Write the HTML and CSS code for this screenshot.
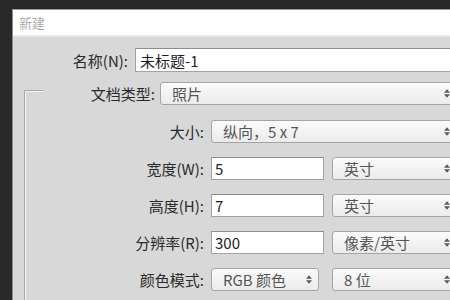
FILE: index.html
```html
<!DOCTYPE html>
<html lang="zh-CN">
<head>
  <meta charset="utf-8">
  <title>新建</title>
<link rel="stylesheet" href="styles.css">
</head>
<body>
  <div class="dialog">
    <div class="titlebar">新建</div>
    <div class="panel">
      <div class="row">
        <span class="lbl lbl-name">名称(N):</span>
        <div class="field field-name">未标题-1</div>
      </div>
      <div class="row">
        <span class="lbl lbl-type">文档类型:</span>
        <div class="select select-type">照片<svg class="arrows" viewBox="0 0 7 10"><path d="M3.5 0 7 4H0zM0 6h7l-3.5 4z"/></svg></div>
      </div>
      <div class="group">
        <div class="grow">
          <span class="lbl lbl-group">大小:</span>
          <div class="select select-full">纵向，5 x 7<svg class="arrows" viewBox="0 0 7 10"><path d="M3.5 0 7 4H0zM0 6h7l-3.5 4z"/></svg></div>
        </div>
        <div class="grow">
          <span class="lbl lbl-group">宽度(W):</span>
          <div class="field field-num">5</div>
          <div class="select select-unit">英寸<svg class="arrows" viewBox="0 0 7 10"><path d="M3.5 0 7 4H0zM0 6h7l-3.5 4z"/></svg></div>
        </div>
        <div class="grow">
          <span class="lbl lbl-group">高度(H):</span>
          <div class="field field-num">7</div>
          <div class="select select-unit">英寸<svg class="arrows" viewBox="0 0 7 10"><path d="M3.5 0 7 4H0zM0 6h7l-3.5 4z"/></svg></div>
        </div>
        <div class="grow">
          <span class="lbl lbl-group">分辨率(R):</span>
          <div class="field field-num">300</div>
          <div class="select select-unit">像素/英寸<svg class="arrows" viewBox="0 0 7 10"><path d="M3.5 0 7 4H0zM0 6h7l-3.5 4z"/></svg></div>
        </div>
        <div class="grow">
          <span class="lbl lbl-group">颜色模式:</span>
          <div class="select select-mode">RGB 颜色<svg class="arrows" viewBox="0 0 7 10"><path d="M3.5 0 7 4H0zM0 6h7l-3.5 4z"/></svg></div>
          <div class="select select-unit">8 位<svg class="arrows" viewBox="0 0 7 10"><path d="M3.5 0 7 4H0zM0 6h7l-3.5 4z"/></svg></div>
        </div>
      </div>
    </div>
  </div>
</body>
</html>
```

FILE: styles.css
```css
html, body {
  margin: 0;
  height: 100%;
  overflow: hidden;
}
body {
  background: #292929;
  font-family: "Noto Sans CJK SC", "Noto Sans", sans-serif;
  font-size: 15px;
  color: #2b2b2b;
}
.dialog {
  margin: 9px 0 0 12px;
  width: 443px;
  height: 291px;
  overflow: hidden;
  background: #d8d8d8;
  border-top: 1px solid #9a9a9a;
  border-left: 1px solid #8a8a8a;
}
.titlebar {
  height: 25px;
  line-height: 25px;
  padding-left: 6px;
  background: #fff;
  color: #ababab;
  font-size: 13px;
  border-bottom: 2px solid #e6e6e6;
}
.panel {
  display: flex;
  flex-direction: column;
  padding-top: 11px;
}
.row {
  display: flex;
  align-items: center;
  height: 24px;
  margin-bottom: 9px;
}
.grow {
  display: flex;
  align-items: center;
  height: 23px;
  margin-bottom: 14px;
}
.lbl {
  text-align: right;
  white-space: nowrap;
  line-height: 1;
}
.lbl-name {
  width: 115px;
  margin-right: 7px;
}
.lbl-type {
  width: 142px;
  margin-right: 5px;
}
.lbl-group {
  width: 179px;
  margin-right: 7px;
}
.group {
  position: relative;
  margin: -24px 0 0 11px;
  padding-top: 30px;
  border-left: 1px solid #a8a8a8;
  box-shadow: inset 1px 0 #f3f3f3;
  height: 220px;
}
.group::before {
  content: "";
  position: absolute;
  left: 0;
  top: 0;
  width: 18px;
  height: 1px;
  background: #a8a8a8;
  box-shadow: 0 1px #f3f3f3;
}
.field {
  box-sizing: border-box;
  height: 100%;
  display: flex;
  align-items: center;
  padding-left: 4px;
  background: #fff;
  border: 1px solid #a2a2a2;
  border-top-color: #8e8e8e;
  color: #1e1e1e;
  white-space: nowrap;
}
.field-name {
  flex: 1;
  padding-left: 4px;
}
.field-num {
  width: 113px;
  padding-left: 3px;
  margin-right: 8px;
}
.select {
  box-sizing: border-box;
  height: 100%;
  display: flex;
  align-items: center;
  justify-content: space-between;
  padding: 0 5px 0 11px;
  background: linear-gradient(#fbfbfb, #ebebeb);
  border: 1px solid #a5a5a5;
  border-radius: 3px;
  color: #555;
  white-space: nowrap;
}
.select-type, .select-full, .select-unit {
  flex: 1;
}
.select-type {
  height: 23px;
}
.select-mode {
  width: 108px;
  margin-right: 13px;
  padding-right: 6px;
}
.arrows {
  width: 6px;
  height: 9px;
  fill: #5a5a5a;
  flex: none;
}
```
